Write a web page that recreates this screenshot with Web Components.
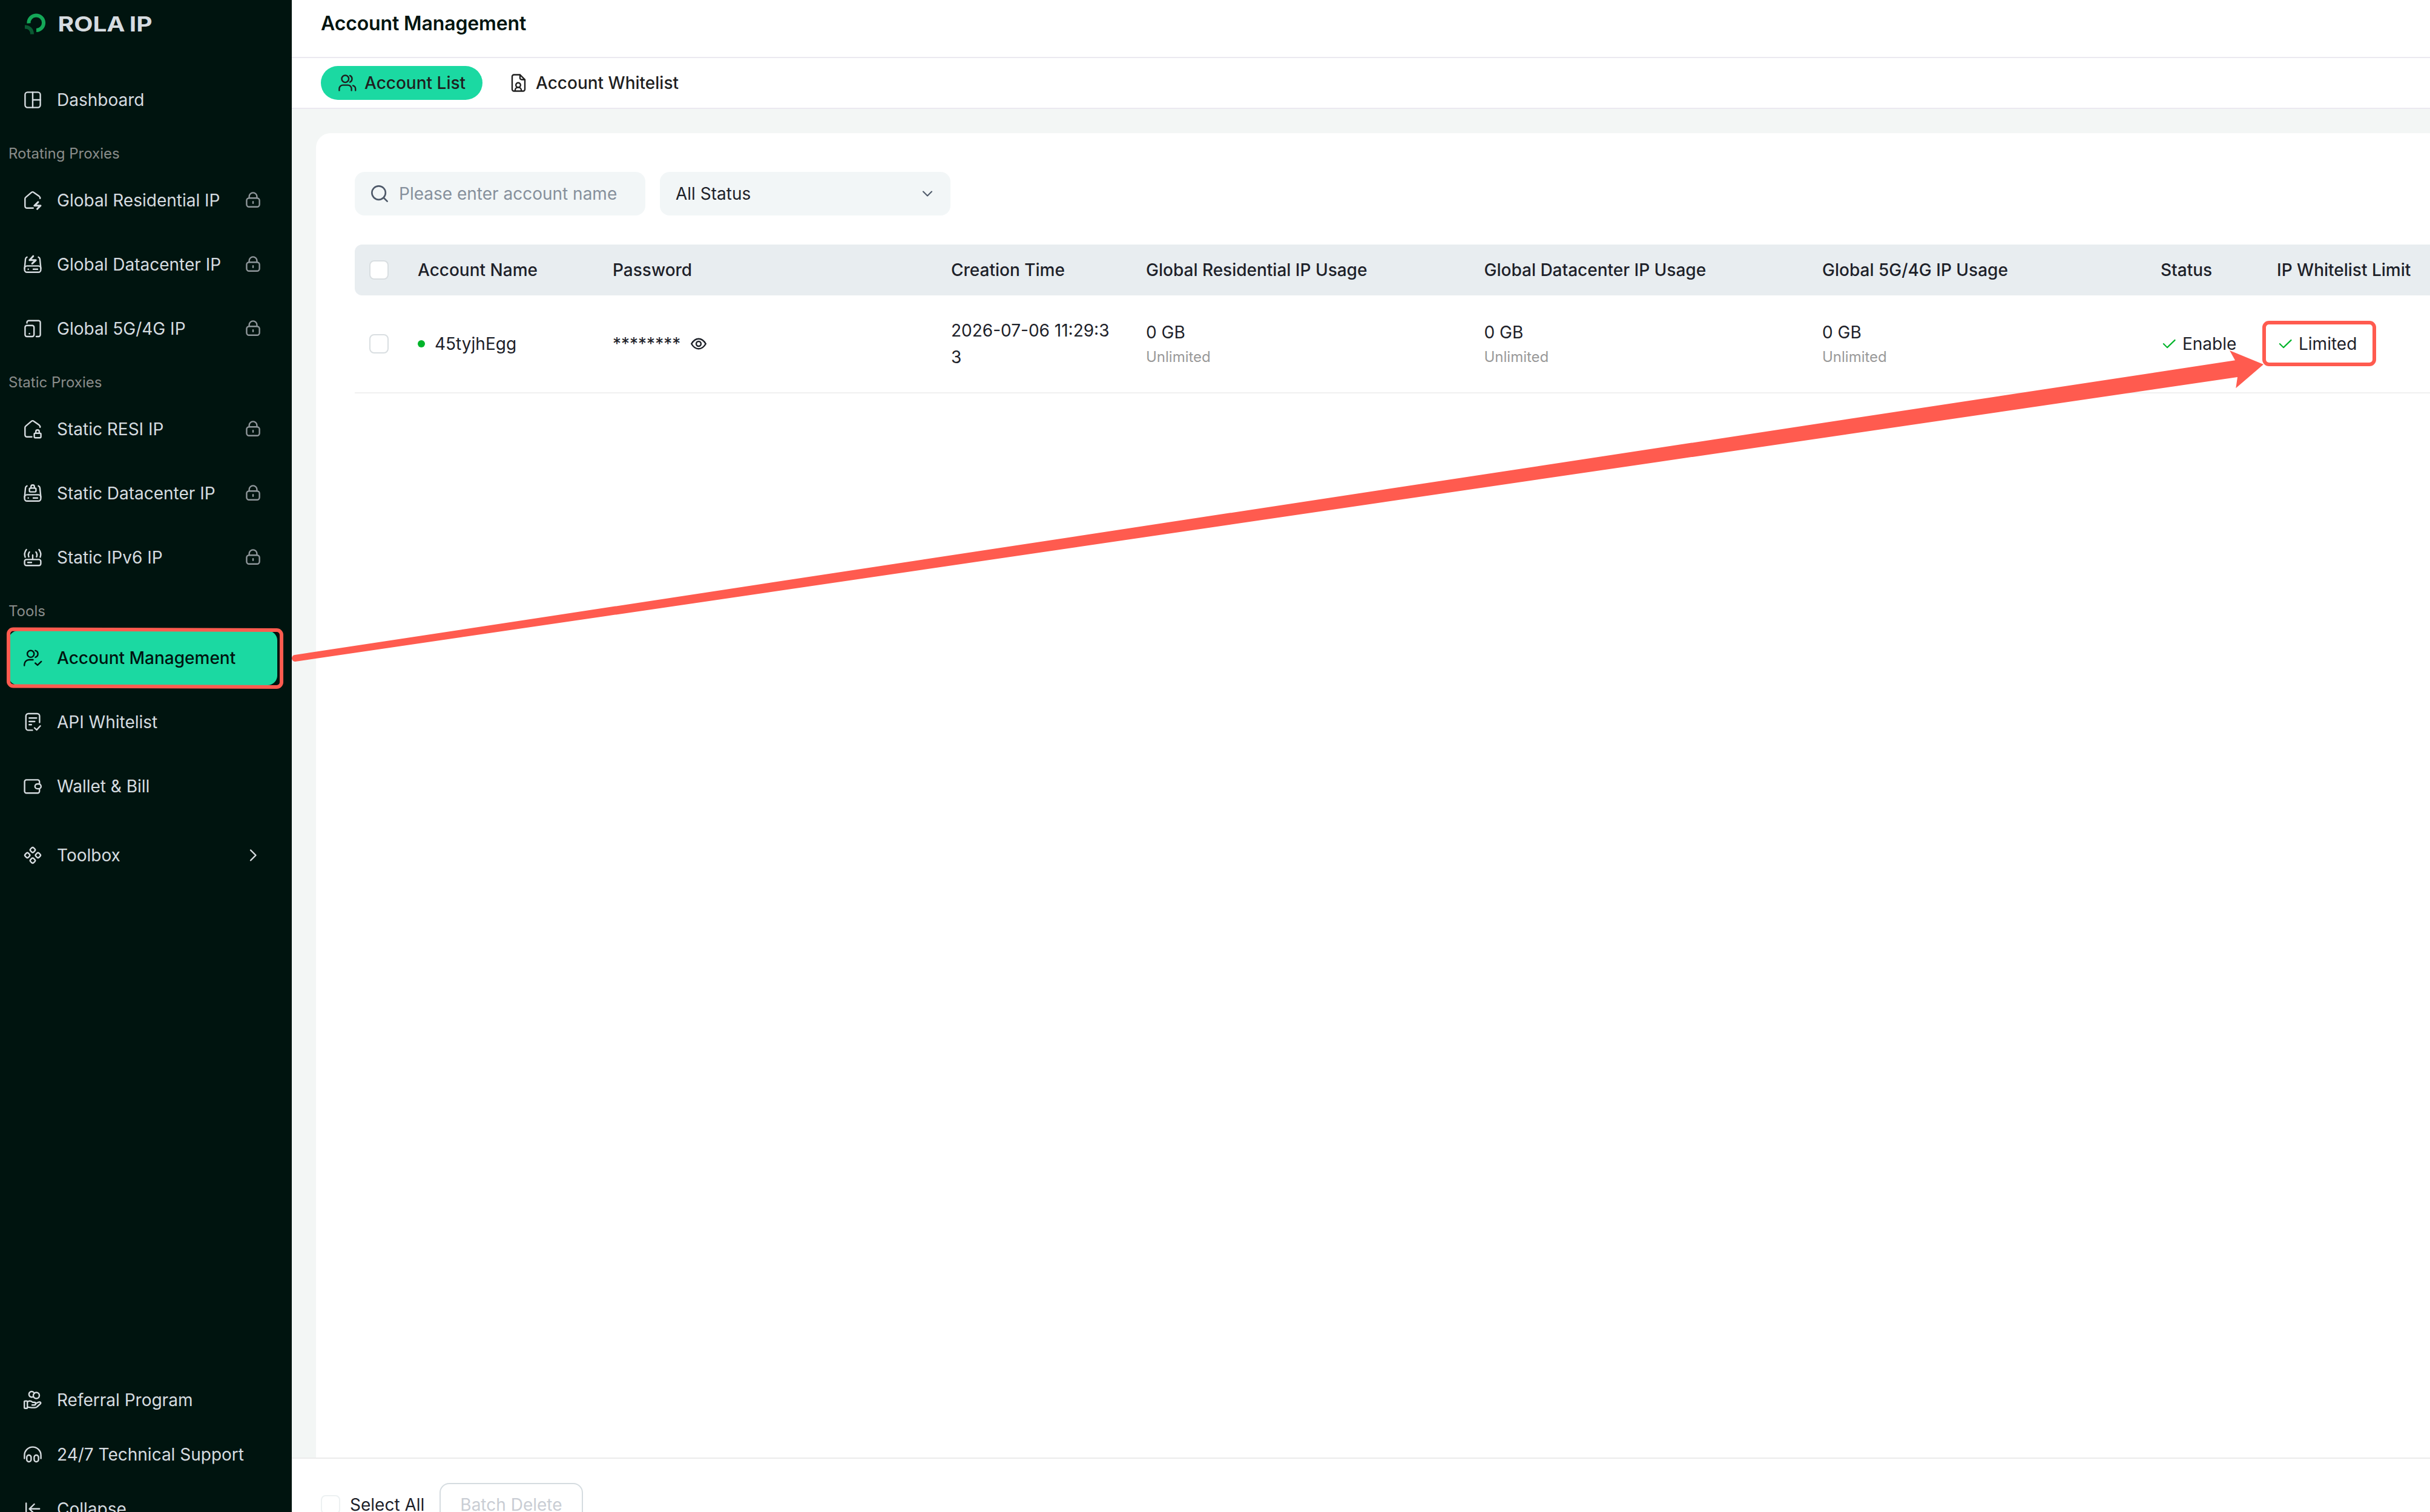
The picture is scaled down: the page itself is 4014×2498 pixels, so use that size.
<!DOCTYPE html>
<html lang="en">
<head>
<meta charset="utf-8">
<title>Account Management</title>
<style>
  html, body {
    margin: 0;
    width: 4014px;
    height: 2498px;
    overflow: hidden;
    background: #fff;
    font-family: Inter, "Liberation Sans", sans-serif;
    font-size: 28px;
    line-height: 44px;
    color: #1d2129;
  }
</style>
</head>
<body>
<rola-app></rola-app>

<script>
const css = (s) => `<style>*, *::before { box-sizing: border-box; }${s}</style>`;

const ICONS = {
  dashboard: `<rect x="3.4" y="3.4" width="25.2" height="25.2" rx="4"/><path d="M16 3.400v25.200M16 16h12.600"/>`,
  homeFlash: `<path d="M16.8 28.8H6.500a3.200 3.200 0 0 1-3.200-3.200V13.500c0-1 .5-2 1.300-2.600L14 2.900a3 3 0 0 1 3.800 0l9 6.400a4 4 0 0 1 1.400 3.500"/><path d="M25 18.800l-6.200 6H29l-5.500 5.500" stroke-width="3"/>`,
  homeLock: `<path d="M14.500 28.800H6.500a3.200 3.200 0 0 1-3.200-3.200V13.500c0-1 .5-2 1.300-2.600L14 2.900a3 3 0 0 1 3.800 0l9 6.400a4 4 0 0 1 1.400 3.500"/><rect x="18.600" y="22.800" width="11" height="7.400" rx="1.600"/><path d="M21.200 22.800v-2.800a2.800 2.800 0 0 1 5.600 0v2.800"/>`,
  serverFlash: `<path d="M6.500 3.800c-1.600.5-2.200 1.500-2.400 3L2.600 22M25.500 3.800c1.600.5 2.200 1.500 2.400 3L29.400 22"/><rect x="2.600" y="18.400" width="26.800" height="10.400" rx="4"/><path d="M8.600 23.800h.1M17 23.800h7"/><path d="M16.800 2.200l-6 6.600H21.200l-6 5.600" stroke-width="3"/>`,
  serverLock: `<path d="M6.500 3.800c-1.600.5-2.200 1.500-2.400 3L2.600 22M25.500 3.800c1.600.5 2.200 1.500 2.400 3L29.400 22"/><rect x="2.600" y="18.400" width="26.800" height="10.400" rx="4"/><path d="M8.600 23.800h.1M17 23.800h7"/><rect x="10.600" y="7.400" width="10.800" height="6.200" rx="1.600"/><path d="M13.200 7.400V5a2.800 2.800 0 0 1 5.600 0v2.400"/>`,
  router: `<rect x="2.600" y="19.400" width="26.800" height="9.800" rx="3"/><path d="M8 24.300h6M16 12v7M5.600 3c-3.200 4-3.600 8.500-2 12.500M26.400 3c3.200 4 3.600 8.500 2 12.500M10.600 7c-2 2.500-2.200 5-1 8M21.400 7c2 2.500 2.200 5 1 8"/>`,
  phones: `<path d="M6.500 6.500V5.800A3 3 0 0 1 9.500 2.800H25.600a3 3 0 0 1 3 3V26a3 3 0 0 1-3 3H22"/><rect x="3.400" y="10.800" width="14.800" height="18.200" rx="3"/><path d="M10.600 24.200h.1"/>`,
  users: `<circle cx="12.700" cy="9.300" r="5.600"/><path d="M2.200 28.500V27a8 8 0 0 1 8-8h6.300M20.400 3.800a5.700 5.700 0 0 1 0 11M20.200 24.500l3.800 3.400 6.200-6"/>`,
  docCheck: `<path d="M15.500 29.400H8.800a4 4 0 0 1-4-4V6a4 4 0 0 1 4-4h14.600a4 4 0 0 1 4 4V16.500M10.300 9.200h12M10.300 15h9M10.300 20.200h3.500M19 25.500l3.600 3.400 6-6.600"/>`,
  wallet: `<path d="M27.200 11.800V8.400a3 3 0 0 0-3-3H5.600a3 3 0 0 0-3 3V24.200a3 3 0 0 0 3 3H24.200a3 3 0 0 0 3-3V20.500"/><rect x="19.800" y="12.300" width="10" height="7.800" rx="3.900"/>`,
  toolbox: `<rect x="-3.600" y="-3.600" width="7.200" height="7.200" rx="2.400" transform="translate(16 7.200) rotate(45)"/><rect x="-3.600" y="-3.600" width="7.200" height="7.200" rx="2.400" transform="translate(16 24.800) rotate(45)"/><rect x="-3.600" y="-3.600" width="7.200" height="7.200" rx="2.400" transform="translate(7.200 16) rotate(45)"/><rect x="-3.600" y="-3.600" width="7.200" height="7.200" rx="2.400" transform="translate(24.800 16) rotate(45)"/>`,
  hand: `<path d="M16.200 10.800a4.600 4.600 0 1 1 2.600-5.600"/><circle cx="22" cy="8.500" r="5"/><rect x="2.200" y="17.600" width="5" height="12.200" rx="1"/><path d="M7.200 19c3-2 6.500-1.500 9 .8h2.600a2.200 2.200 0 0 1 0 4.400H15M20.500 22l5-2.400c3-1.200 4.800.8 3 2.800l-5 4.600c-1.200 1.200-2.500 1.600-4 1.600H14c-3 0-4-.8-6.800-.8"/>`,
  headset: `<path d="M2.400 22.600V17.200a13.600 13.600 0 0 1 27.200 0v5.400"/><rect x="6.200" y="17" width="7.200" height="11" rx="3.600"/><rect x="18.400" y="17" width="7.200" height="11" rx="3.600"/>`,
  collapse: `<path d="M5.200 6.400v19.200M27.200 15.800H11M18.600 8l-8 7.800 8 7.800"/>`,
  lock: `<rect x="5.400" y="12.200" width="21.200" height="14.600" rx="4"/><path d="M9.600 12V9.800a6.400 6.400 0 0 1 12.800 0V12M16 18.200v2.600"/>`,
  chevronRight: `<path d="M12 7.500l8.500 8.500-8.500 8.500"/>`,
  accounts: `<circle cx="12.300" cy="9.300" r="5.800"/><path d="M2.400 28.400v-2.800a6 6 0 0 1 6-6h8.200a6 6 0 0 1 6 6v2.800M20 3.900a5.900 5.900 0 0 1 0 10.800M25 20.400c2.600.8 4.200 2.800 4.200 5.400v2.600"/>`,
  fileUser: `<path d="M18 2.500H8a3 3 0 0 0-3 3v21a3 3 0 0 0 3 3H23a3 3 0 0 0 3-3V10.500L18 2.500V8a2.500 2.500 0 0 0 2.500 2.500H26"/><circle cx="15" cy="19.500" r="3.800"/><path d="M9.800 28.500c0-3 2.300-5.200 5.200-5.200s5.200 2.200 5.200 5.200"/>`,
  search: `<circle cx="14.500" cy="14.500" r="12"/><path d="M23.500 23.500l6 6"/>`,
  chevronDown: `<path d="M8 12l8 8 8-8"/>`,
  eye: `<path d="M2.500 16C6 10 10.500 6.500 16 6.500S26 10 29.500 16C26 22 21.500 25.500 16 25.500S6 22 2.500 16z"/><circle cx="16" cy="16" r="4.500"/>`,
  check: `<path d="M5.500 16l7 7L27 9"/>`
};

class RolaIcon extends HTMLElement {
  connectedCallback() {
    const size = this.getAttribute("size") || 32;
    const stroke = this.getAttribute("stroke") || 2.4;
    this.attachShadow({ mode: "open" }).innerHTML = `
    ${css(`
      :host { display: block; flex: none; width: ${size}px; height: ${size}px; }
      svg { display: block; overflow: visible; }
    `)}
    <svg width="${size}" height="${size}" viewBox="0 0 32 32" fill="none" stroke="currentColor"
      stroke-width="${stroke}" stroke-linecap="round" stroke-linejoin="round">${ICONS[this.getAttribute("name")]}</svg>`;
  }
}

class RolaLogo extends HTMLElement {
  connectedCallback() {
    this.attachShadow({ mode: "open" }).innerHTML = `
    ${css(`
      :host { display: flex; height: 120px; padding: 21px 0 0 40px; }
      svg { flex: none; display: block; overflow: visible; }
      text { word-spacing: -2px; }
    `)}
    <svg width="220" height="38" viewBox="0 0 220 38">
      <path d="M7.500 17.500A12.300 12.300 0 1 1 20 29" fill="none" stroke="#14a858" stroke-width="6"/>
      <path d="M1 23.500c7 0 12 4.500 12 12" fill="none" stroke="#0a5a33" stroke-width="6"/>
      <text x="55.500" y="31" textLength="156" lengthAdjust="spacingAndGlyphs" font-size="34" font-weight="700" fill="#d6dce0">ROLA IP</text>
    </svg>`;
  }
}

class NavItem extends HTMLElement {
  connectedCallback() {
    const end = this.getAttribute("end");
    this.attachShadow({ mode: "open" }).innerHTML = `
    ${css(`
      :host {
        display: flex;
        align-items: center;
        height: 90px;
        margin: 0 24px 16px 14px;
        padding: 0 24px;
        border-radius: 16px;
        color: #d6dce0;
      }
      :host([active]) { background: #1bd9a2; color: #00140f; font-weight: 500; }
      .label { flex: 1; margin-left: 24px; white-space: nowrap; }
      .end { color: ${end === "lock" ? "#8f979b" : "#d6dce0"}; }
    `)}
    <rola-icon name="${this.getAttribute("icon")}"></rola-icon>
    <span class="label"><slot></slot></span>
    ${end ? `<rola-icon class="end" name="${end}"></rola-icon>` : ""}`;
  }
}

class NavLabel extends HTMLElement {
  connectedCallback() {
    this.attachShadow({ mode: "open" }).innerHTML = `
    ${css(`:host { display: block; margin-top: -16px; padding: 22px 14px 10px; font-size: 24px; color: #8a8d8b; }`)}
    <slot></slot>`;
  }
}

class RolaSidebar extends HTMLElement {
  connectedCallback() {
    this.attachShadow({ mode: "open" }).innerHTML = `
    ${css(`
      :host {
        display: flex;
        flex-direction: column;
        flex: none;
        width: 482px;
        height: 2538px;
        background: #00140f;
      }
      .toolbox { margin-top: 8px; }
      footer { margin-top: auto; }
      footer nav-item { margin-bottom: 0; }
    `)}
    <rola-logo></rola-logo>
    <nav-item icon="dashboard">Dashboard</nav-item>
    <nav-label>Rotating Proxies</nav-label>
    <nav-item icon="homeFlash" end="lock">Global Residential IP</nav-item>
    <nav-item icon="serverFlash" end="lock">Global Datacenter IP</nav-item>
    <nav-item icon="phones" end="lock">Global 5G/4G IP</nav-item>
    <nav-label>Static Proxies</nav-label>
    <nav-item icon="homeLock" end="lock">Static RESI IP</nav-item>
    <nav-item icon="serverLock" end="lock">Static Datacenter IP</nav-item>
    <nav-item icon="router" end="lock">Static IPv6 IP</nav-item>
    <nav-label>Tools</nav-label>
    <nav-item icon="users" active>Account Management</nav-item>
    <nav-item icon="docCheck">API Whitelist</nav-item>
    <nav-item icon="wallet">Wallet &amp; Bill</nav-item>
    <nav-item class="toolbox" icon="toolbox" end="chevronRight">Toolbox</nav-item>
    <footer>
      <nav-item icon="hand">Referral Program</nav-item>
      <nav-item icon="headset">24/7 Technical Support</nav-item>
      <nav-item icon="collapse">Collapse</nav-item>
    </footer>`;
  }
}

class PageTabs extends HTMLElement {
  connectedCallback() {
    this.attachShadow({ mode: "open" }).innerHTML = `
    ${css(`
      :host { display: block; background: #fff; }
      h1 {
        margin: 0;
        height: 96px;
        padding: 17px 48px 0;
        border-bottom: 2px solid #ebe9f0;
        font-size: 32px;
        font-weight: 600;
        letter-spacing: -0.13px;
        color: #00140f;
      }
      .tabs {
        display: flex;
        align-items: center;
        height: 84px;
        padding: 0 48px;
        border-bottom: 2px solid #ebe9f0;
        font-weight: 500;
        color: #1f1f1f;
      }
      .tab { display: flex; align-items: center; gap: 12px; height: 56px; padding: 0 28px; border-radius: 28px; white-space: nowrap; }
      .active { background: #1bd9a2; }
      .tab + .tab { margin-left: 16px; }
    `)}
    <h1>Account Management</h1>
    <div class="tabs">
      <div class="tab active"><rola-icon name="accounts"></rola-icon><span>Account List</span></div>
      <div class="tab"><rola-icon name="fileUser"></rola-icon><span>Account Whitelist</span></div>
    </div>`;
  }
}

class CheckBox extends HTMLElement {
  connectedCallback() {
    this.attachShadow({ mode: "open" }).innerHTML = css(`
      :host { display: block; flex: none; width: 32px; height: 32px; box-sizing: border-box; border: 2px solid var(--check-border, #d9dee1); border-radius: 8px; background: #fff; }
    `);
  }
}

class FilterBar extends HTMLElement {
  connectedCallback() {
    this.attachShadow({ mode: "open" }).innerHTML = `
    ${css(`
      :host { display: flex; gap: 24px; }
      .field { display: flex; align-items: center; width: 480px; height: 72px; border-radius: 16px; background: #f2f6f7; padding: 0 24px 0 26px; }
      .field rola-icon { color: #4e5969; }
      .placeholder { margin-left: 17px; color: #86909c; white-space: nowrap; }
      .value { flex: 1; }
    `)}
    <div class="field"><rola-icon name="search" size="30" stroke="2.800"></rola-icon><span class="placeholder">Please enter account name</span></div>
    <div class="field"><span class="value">All Status</span><rola-icon name="chevronDown" size="28"></rola-icon></div>`;
  }
}

class AccountTable extends HTMLElement {
  connectedCallback() {
    const usage = `<div class="usage"><span>0 GB</span><small>Unlimited</small></div>`;
    this.attachShadow({ mode: "open" }).innerHTML = `
    ${css(`
      :host { display: block; margin-top: 48px; }
      .row {
        display: grid;
        grid-template-columns: 80px 322px 559px 322px 558.500px 558.500px 559px 192px 400px;
        align-items: center;
        width: 3552px;
      }
      .row > * { padding: 0 24px; }
      .row > check-box { margin-left: 24px; padding: 0; }
      .head { height: 84px; border-radius: 12px; background: #e8edf0; font-weight: 500; }
      .body { height: 162px; border-bottom: 2px solid #f0f0f0; }
      .name { display: flex; align-items: center; gap: 16px; }
      .name::before { content: ""; width: 12px; height: 12px; border-radius: 50%; background: #00b42a; }
      .password { display: flex; align-items: center; gap: 16px; }
      .time { word-break: break-all; }
      .usage { display: flex; flex-direction: column; }
      .usage span { line-height: 44px; }
      .usage small { font-size: 24px; line-height: 38px; color: #999; }
      .state { display: flex; align-items: center; gap: 8px; }
      .state rola-icon { color: #00b42a; }
    `)}
    <div class="row head">
      <check-box></check-box>
      <div>Account Name</div>
      <div>Password</div>
      <div>Creation Time</div>
      <div>Global Residential IP Usage</div>
      <div>Global Datacenter IP Usage</div>
      <div>Global 5G/4G IP Usage</div>
      <div>Status</div>
      <div>IP Whitelist Limit</div>
    </div>
    <div class="row body">
      <check-box></check-box>
      <div class="name">45tyjhEgg</div>
      <div class="password"><span>********</span><rola-icon name="eye" size="28" stroke="2.800"></rola-icon></div>
      <div class="time">2026-07-06 11:29:33</div>
      ${usage}
      ${usage}
      ${usage}
      <div class="state"><rola-icon name="check" size="28"></rola-icon>Enable</div>
      <div class="state"><rola-icon name="check" size="28"></rola-icon>Limited</div>
    </div>`;
  }
}

class BatchBar extends HTMLElement {
  connectedCallback() {
    this.attachShadow({ mode: "open" }).innerHTML = `
    ${css(`
      :host {
        --check-border: #edf1f2;
        display: flex;
        flex: none;
        align-items: center;
        height: 154px;
        padding: 0 48px;
        border-top: 2px solid #ebebeb;
        background: #fff;
      }
      .all { margin: 0 25px 0 16px; }
      .button { height: 72px; padding: 12px 32px; border: 2px solid #d5dce0; border-radius: 16px; color: #c9cdd4; white-space: nowrap; }
    `)}
    <check-box></check-box>
    <span class="all">Select All</span>
    <div class="button">Batch Delete</div>`;
  }
}

// Red boxes and the arrow that lie over the page
class RolaMarkup extends HTMLElement {
  connectedCallback() {
    this.attachShadow({ mode: "open" }).innerHTML = `
    ${css(`
      :host { position: absolute; inset: 0; pointer-events: none; }
      svg { display: block; }
    `)}
    <svg width="4014" height="2498" viewBox="0 0 4014 2498">
      <g fill="none" stroke="#ff5b4f" stroke-width="6">
        <path d="M22 1039.500L457 1041a8 8 0 0 1 8 8V1127a8 8 0 0 1-8 8L22 1133.500a8 8 0 0 1-8-8V1047.500a8 8 0 0 1 8-8z"/>
        <rect x="3740" y="533" width="182" height="69" rx="8"/>
      </g>
      <path d="M487 1082L3692 595.300L3683 579L3739 602L3693.300 641.300L3696 623L488 1093A5.500 5.500 0 0 1 487 1082z" fill="#ff5b4f"/>
    </svg>`;
  }
}

class RolaApp extends HTMLElement {
  connectedCallback() {
    this.attachShadow({ mode: "open" }).innerHTML = `
    ${css(`
      :host { display: flex; position: relative; width: 4014px; height: 2498px; overflow: hidden; }
      main { display: flex; flex-direction: column; flex: 1; min-width: 0; height: 2562px; background: #f3f6f5; }
      .card { flex: 1; min-height: 0; margin: 40px 0 0 40px; padding: 64px 0 0 64px; border-radius: 24px 0 0 0; background: #fff; overflow: hidden; }
    `)}
    <rola-sidebar></rola-sidebar>
    <main>
      <page-tabs></page-tabs>
      <section class="card">
        <filter-bar></filter-bar>
        <account-table></account-table>
      </section>
      <batch-bar></batch-bar>
    </main>
    <rola-markup></rola-markup>`;
  }
}

customElements.define("rola-icon", RolaIcon);
customElements.define("rola-logo", RolaLogo);
customElements.define("nav-item", NavItem);
customElements.define("nav-label", NavLabel);
customElements.define("rola-sidebar", RolaSidebar);
customElements.define("page-tabs", PageTabs);
customElements.define("check-box", CheckBox);
customElements.define("filter-bar", FilterBar);
customElements.define("account-table", AccountTable);
customElements.define("batch-bar", BatchBar);
customElements.define("rola-markup", RolaMarkup);
customElements.define("rola-app", RolaApp);
</script>
</body>
</html>
